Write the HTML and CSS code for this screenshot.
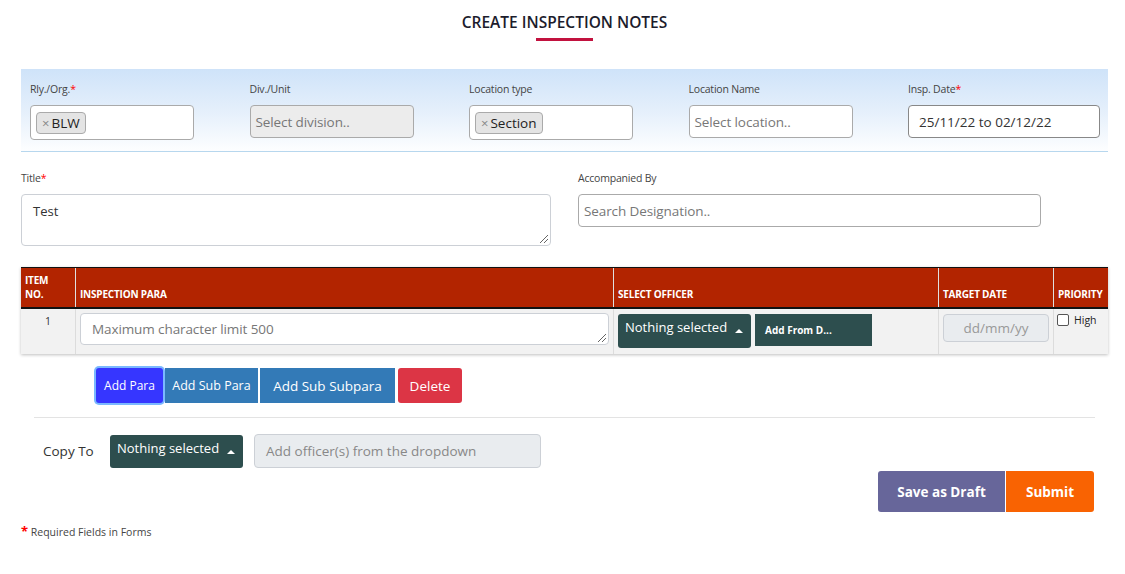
FILE: index.html
```html
<!DOCTYPE html>
<html>
<head>
<meta charset="utf-8">
<link rel="stylesheet" href="styles.css">
</head>
<body>
<div class="page">
  <div class="heading">
    <h1>CREATE INSPECTION NOTES</h1>
    <div class="underline"></div>
  </div>

  <div class="filters">
    <div class="fcol">
      <label class="lbl">Rly./Org.<span class="req">*</span></label>
      <div class="box tagbox"><span class="tag"><span class="x">×</span>BLW</span></div>
    </div>
    <div class="fcol">
      <label class="lbl">Div./Unit</label>
      <div class="box disabled small"><span class="ph">Select division..</span></div>
    </div>
    <div class="fcol">
      <label class="lbl">Location type</label>
      <div class="box tagbox"><span class="tag"><span class="x">×</span>Section</span></div>
    </div>
    <div class="fcol">
      <label class="lbl">Location Name</label>
      <div class="box small"><span class="ph">Select location..</span></div>
    </div>
    <div class="fcol last">
      <label class="lbl">Insp. Date<span class="req">*</span></label>
      <div class="box date"><span class="val">25/11/22 to 02/12/22</span></div>
    </div>
  </div>

  <div class="row2">
    <div class="tcol">
      <label class="lbl">Title<span class="req">*</span></label>
      <div class="textarea"><span class="val">Test</span><span class="grip"></span></div>
    </div>
    <div class="acol">
      <label class="lbl">Accompanied By</label>
      <div class="box search"><span class="ph">Search Designation..</span></div>
    </div>
  </div>

  <div class="table">
    <div class="thead">
      <div class="th c1">ITEM<br>NO.</div>
      <div class="th c2">INSPECTION PARA</div>
      <div class="th c3">SELECT OFFICER</div>
      <div class="th c4">TARGET DATE</div>
      <div class="th c5">PRIORITY</div>
    </div>
    <div class="trow">
      <div class="td c1 num">1</div>
      <div class="td c2"><div class="para"><span class="ph">Maximum character limit 500</span><span class="grip"></span></div></div>
      <div class="td c3">
        <div class="dd"><span>Nothing selected</span><span class="caret"></span></div>
        <div class="addfrom">Add From D...</div>
      </div>
      <div class="td c4"><div class="tdate">dd/mm/yy</div></div>
      <div class="td c5"><span class="chk"></span><span class="high">High</span></div>
    </div>
  </div>

  <div class="actions">
    <button class="btn addpara">Add Para</button>
    <button class="btn sub">Add Sub Para</button>
    <button class="btn subsub">Add Sub Subpara</button>
    <button class="btn del">Delete</button>
  </div>

  <div class="sep"></div>

  <div class="copy">
    <span class="copylbl">Copy To</span>
    <div class="dd dd2"><span>Nothing selected</span><span class="caret"></span></div>
    <div class="officers">Add officer(s) from the dropdown</div>
  </div>

  <div class="final">
    <button class="fbtn draft">Save as Draft</button>
    <button class="fbtn submit">Submit</button>
  </div>

  <div class="note"><span class="req">*</span> Required Fields in Forms</div>
</div>
</body>
</html>
```

FILE: styles.css
```css
* { box-sizing: border-box; }
html, body { margin: 0; padding: 0; background: #fff; }
body { font-family: "Open Sans", "Noto Sans", sans-serif; color: #333; }
.page { width: 1125px; padding: 0 17px 0 21px; }

.heading { display: flex; flex-direction: column; align-items: center; padding-top: 12px; height: 69px; }
.heading h1 { margin: 0; font-size: 15.5px; font-weight: 600; color: #1c1c2c; letter-spacing: 0; line-height: 20px; }
.underline { width: 57px; height: 3px; background: #c2123f; margin-top: 6px; }

.filters { display: flex; height: 83px; padding: 12px 0 0 9px; background: linear-gradient(to bottom, #cfe3f9 0%, #e4effb 50%, #fdfeff 100%); border-bottom: 1px solid #b7d7ee; }
.fcol { width: 219.5px; flex-shrink: 0; display: flex; flex-direction: column; }
.fcol.last { width: auto; flex: 1; }
.lbl { font-size: 10.5px; color: #444; height: 17px; line-height: 17px; display: block; letter-spacing: -0.2px; }
.req { color: #f00; }
.box { width: 164px; height: 35px; border: 1px solid #aaa; border-radius: 4px; background: #fff; display: flex; align-items: center; padding: 0 5px; margin-top: 7px; }
.box.small { height: 33px; }
.box.disabled { background: #ececec; }
.ph { font-size: 13.5px; color: #777; letter-spacing: -0.1px; }
.val { font-size: 13.5px; color: #333; }
.tag { display: inline-flex; align-items: center; height: 22px; padding: 0 5px 0 5px; border: 1px solid #aaa; border-radius: 4px; background: #e4e4e4; font-size: 13.5px; color: #222; }
.tag .x { color: #888; font-size: 13px; margin-right: 2px; }
.box.date { width: 192px; height: 33px; border-color: #888; padding-left: 10px; }

.row2 { display: flex; padding-top: 18px; height: 115px; }
.tcol { width: 557px; }
.acol { width: 463px; }
.textarea { position: relative; width: 530px; height: 52px; border: 1px solid #ccd0d6; border-radius: 4px; margin-top: 7px; padding: 4px 11px; }
.textarea .val { font-size: 13px; }
.grip { position: absolute; right: 2px; bottom: 2px; width: 8px; height: 8px; background: linear-gradient(135deg, transparent 45%, #666 45%, #666 52%, transparent 52%, transparent 70%, #666 70%, #666 77%, transparent 77%); }
.box.search { width: 463px; height: 33px; padding-left: 5px; }

.table { width: 1087px; box-shadow: 0 1px 3px rgba(0,0,0,0.25); }
.thead { display: flex; height: 42px; background: #b22400; border-top: 1px solid #111; border-bottom: 2px solid #111; }
.th { color: #fff; font-size: 10px; font-weight: 700; display: flex; align-items: flex-end; padding: 0 4px 6px 4px; line-height: 14px; border-left: 1px solid #e0e0e0; letter-spacing: -0.2px; }
.th.c1 { border-left: none; }
.c1 { width: 54px; }
.c2 { width: 538px; }
.c3 { width: 325px; }
.c4 { width: 115px; }
.c5 { width: 55px; }
.trow { display: flex; height: 45px; background: #f2f2f2; }
.td { border-left: 1px solid #dcdcdc; padding: 4px; display: flex; align-items: flex-start; }
.td.c1 { border-left: none; justify-content: center; font-size: 10.5px; color: #333; padding-top: 5px; }
.para { position: relative; width: 530px; height: 32px; background: #fff; border: 1px solid #ccd0d6; border-radius: 4px; padding: 0 11px; display: flex; align-items: center; }
.para .ph { font-size: 13.5px; color: #777; }
.td.c3 { padding-top: 5px; gap: 4px; }
.dd { width: 133px; height: 34px; background: #2d4e4e; border-radius: 3px; color: #fff; font-size: 13px; display: flex; justify-content: space-between; padding: 4px 8px 0 7px; }
.caret { width: 0; height: 0; border-left: 4px solid transparent; border-right: 4px solid transparent; border-bottom: 4px solid #fff; margin-top: 11px; }
.addfrom { width: 117px; height: 32px; background: #2d4e4e; color: #fff; font-size: 10px; font-weight: 700; display: flex; align-items: center; padding-left: 10px; }
.tdate { width: 107px; height: 28px; background: #e9ecef; border: 1px solid #ccd0d6; border-radius: 4px; color: #999; font-size: 13.5px; display: flex; align-items: center; justify-content: center; margin-top: 1px; }
.td.c5 { padding: 4px 3px; gap: 5px; }
.chk { width: 12px; height: 12px; border: 1px solid #555; border-radius: 2px; background: #fff; margin-top: 1px; }
.high { font-size: 10.5px; color: #222; line-height: 14px; }

.actions { display: flex; gap: 2px; padding: 14px 0 0 75px; height: 50px; }
.btn { height: 35px; border: none; color: #fff; font-family: inherit; font-size: 12.5px; padding: 0; border-radius: 0; }
.addpara { width: 67px; background: #3636ff; border-radius: 3px; box-shadow: 0 0 0 2px #7ab8ff; font-size: 12px; }
.sub { width: 93px; background: #337ab7; font-size: 12.5px; }
.subsub { width: 135px; background: #337ab7; font-size: 13.5px; }
.del { width: 64px; background: #dc3545; border-radius: 3px; margin-left: 1px; font-size: 13.5px; }

.sep { margin: 13px 13px 0 13px; border-top: 1px solid #e3e3e3; }
.copy { display: flex; align-items: flex-start; padding: 16px 0 0 22px; height: 53px; }
.copylbl { font-size: 13.5px; color: #333; margin-top: 8px; width: 67px; }
.dd2 { height: 33px; margin-top: 1px; }
.officers { width: 287px; height: 34px; margin-left: 11px; background: #e9ecef; border: 1px solid #ccd0d6; border-radius: 4px; color: #888; font-size: 13.5px; display: flex; align-items: center; padding-left: 11px; }

.final { display: flex; justify-content: flex-end; gap: 1px; padding-right: 14px; height: 51px; }
.fbtn { height: 41px; border: none; color: #fff; font-family: inherit; font-size: 13.5px; font-weight: 700; }
.draft { width: 127px; background: #67669a; border-radius: 3px 0 0 3px; }
.submit { width: 88px; background: #f96302; border-radius: 0 3px 3px 0; }

.note { font-size: 10.5px; color: #444; padding-top: 0; }
.note .req { font-size: 13px; font-weight: 700; }
```
